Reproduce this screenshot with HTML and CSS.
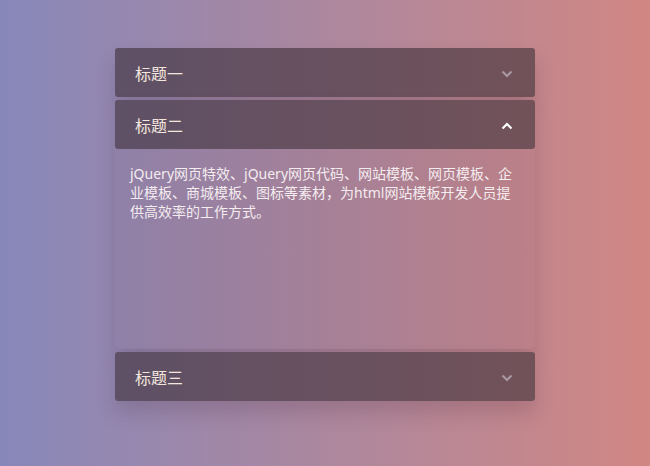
FILE: index.html
```html
<!DOCTYPE html>
<html lang="zh">
<head>
<meta charset="utf-8">
<title>Accordion</title>
<link rel="stylesheet" href="styles.css">
</head>
<body>
<div class="accordion">
  <div class="item">
    <div class="head">
      <span class="title">标题一</span>
      <svg class="chev dim" width="12" height="8" viewBox="0 0 12 8"><polyline points="1.5,1.5 6,6 10.5,1.5" fill="none" stroke="currentColor" stroke-width="2.2"/></svg>
    </div>
  </div>
  <div class="item open">
    <div class="head">
      <span class="title">标题二</span>
      <svg class="chev" width="12" height="8" viewBox="0 0 12 8"><polyline points="1.5,6.5 6,2 10.5,6.5" fill="none" stroke="currentColor" stroke-width="2.2"/></svg>
    </div>
    <div class="body">jQuery网页特效、jQuery网页代码、网站模板、网页模板、企业模板、商城模板、图标等素材，为html网站模板开发人员提供高效率的工作方式。</div>
  </div>
  <div class="item">
    <div class="head">
      <span class="title">标题三</span>
      <svg class="chev dim" width="12" height="8" viewBox="0 0 12 8"><polyline points="1.5,1.5 6,6 10.5,1.5" fill="none" stroke="currentColor" stroke-width="2.2"/></svg>
    </div>
  </div>
</div>
</body>
</html>
```
FILE: styles.css
```css
html, body {
  margin: 0;
  padding: 0;
  height: 100%;
}
body {
  background: linear-gradient(to right, #8788ba, #d18783);
  font-family: "Noto Sans", "Noto Sans CJK SC", sans-serif;
  overflow: hidden;
}
.accordion {
  width: 420px;
  margin: 48px auto 0;
  display: flex;
  flex-direction: column;
  gap: 3px;
}
.item {
  box-shadow: 0 12px 20px rgba(60, 30, 50, 0.18);
  border-radius: 3px;
}
.head {
  height: 49px;
  box-sizing: border-box;
  padding: 2px 22px 0 20px;
  display: flex;
  align-items: center;
  justify-content: space-between;
  background: linear-gradient(to right, #5e5066, #725259);
  border-radius: 3px;
  color: #f2e6de;
  font-size: 16px;
}
.title {
  line-height: 20px;
}
.chev {
  color: #ffffff;
  display: block;
}
.chev.dim {
  color: #a898a4;
}
.body {
  height: 200px;
  box-sizing: border-box;
  padding: 15px 15px;
  background: rgba(80, 40, 70, 0.07);
  color: #f4ecef;
  font-size: 14px;
  line-height: 19px;
}
```
